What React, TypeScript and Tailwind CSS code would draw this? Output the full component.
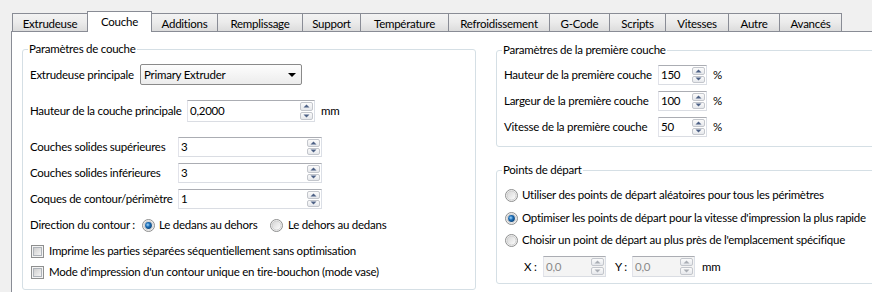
import React from "react";

const tabs = [
  { label: "Extrudeuse", w: "w-[76px]" },
  { label: "Couche", w: "w-[65px]", active: true },
  { label: "Additions", w: "w-[67px]" },
  { label: "Remplissage", w: "w-[86px]" },
  { label: "Support", w: "w-[59px]" },
  { label: "Température", w: "w-[89px]" },
  { label: "Refroidissement", w: "w-[102px]" },
  { label: "G-Code", w: "w-[61px]" },
  { label: "Scripts", w: "w-[57px]" },
  { label: "Vitesses", w: "w-[64px]" },
  { label: "Autre", w: "w-[52px]" },
  { label: "Avancés", w: "w-[63px]" },
];

function SpinArrow({ up, disabled }: { up?: boolean; disabled?: boolean }) {
  return (
    <div className="flex-1 flex items-center justify-center border border-[#c3c6cc] rounded-[2px] bg-linear-to-b from-[#fbfbfb] to-[#e6e8ec]">
      <svg width="7" height="4" viewBox="0 0 7 4">
        <path
          d={up ? "M0.5 3.5 L3.5 0.5 L6.5 3.5 Z" : "M0.5 0.5 L3.5 3.5 L6.5 0.5 Z"}
          fill={disabled ? "#a9adb4" : "#4d6185"}
        />
      </svg>
    </div>
  );
}

function Spin({ value, w, h = "h-[20px]", disabled }: { value: string; w: string; h?: string; disabled?: boolean }) {
  return (
    <div
      className={`${w} ${h} flex border border-[#abadb3] border-b-[#dadde3] border-l-[#e2e3ea] border-r-[#dbdfe6] ${
        disabled ? "bg-[#f4f4f4] text-[#8a8a8a]" : "bg-white text-black"
      }`}
    >
      <div className="flex-1 flex items-center pl-[2px]">{value}</div>
      <div className="w-[15px] flex flex-col gap-px p-px">
        <SpinArrow up disabled={disabled} />
        <SpinArrow disabled={disabled} />
      </div>
    </div>
  );
}

function Radio({ checked }: { checked?: boolean }) {
  return (
    <svg width="13" height="13" viewBox="0 0 13 13" className="shrink-0">
      <defs>
        <linearGradient id="rg" x1="0" y1="0" x2="1" y2="1">
          <stop offset="0" stopColor="#d4d4d4" />
          <stop offset="1" stopColor="#ffffff" />
        </linearGradient>
        <radialGradient id="dot" cx="0.4" cy="0.4" r="0.7">
          <stop offset="0" stopColor="#a6dbff" />
          <stop offset="0.45" stopColor="#1b6cb5" />
          <stop offset="1" stopColor="#0b3c6b" />
        </radialGradient>
      </defs>
      <circle cx="6.5" cy="6.5" r="6" fill="#f4f4f4" stroke="#8e8f8f" />
      <circle cx="6.5" cy="6.5" r="4.5" fill="url(#rg)" stroke="#c8c8c8" strokeWidth="0.8" />
      {checked && <circle cx="6.5" cy="6.5" r="3.4" fill="url(#dot)" />}
    </svg>
  );
}

function Check() {
  return (
    <svg width="13" height="13" viewBox="0 0 13 13" className="shrink-0">
      <defs>
        <linearGradient id="cg" x1="0" y1="0" x2="1" y2="1">
          <stop offset="0" stopColor="#cbcbcb" />
          <stop offset="1" stopColor="#f7f7f7" />
        </linearGradient>
      </defs>
      <rect x="0.5" y="0.5" width="12" height="12" fill="#f4f4f4" stroke="#8e8f8f" />
      <rect x="2.5" y="2.5" width="8" height="8" fill="url(#cg)" stroke="#aeb3b9" />
    </svg>
  );
}

function Group({ title, className, children }: { title: string; className: string; children: React.ReactNode }) {
  return (
    <div className={`relative border border-[#d5dfe5] rounded-[3px] ${className}`}>
      <span className="absolute -top-[9px] left-[5px] bg-white px-[1px] leading-[16px]">{title}</span>
      {children}
    </div>
  );
}

export default function App() {
  return (
    <div className="w-[872px] h-[292px] overflow-hidden whitespace-nowrap bg-[#f0f0f0] text-[11.5px] tracking-[-0.25px] text-black font-['Lato',sans-serif] leading-[16px]">
      {/* onglets */}
      <div className="flex items-end h-[31px] pl-[12px]">
        {tabs.map((t, i) => (
          <div
            key={t.label}
            className={`${t.w} ${i > 0 ? "-ml-px" : ""} shrink-0 flex justify-center border border-b-0 border-[#898c95] ${
              t.active
                ? "h-[21px] -mb-px relative z-10 bg-white pt-[2px]"
                : "h-[18px] bg-linear-to-b from-[#f3f3f3] via-[#ebebeb] to-[#dcdcdc] pt-[2px]"
            }`}
          >
            {t.label}
          </div>
        ))}
      </div>

      {/* page */}
      <div className="ml-[11px] h-[261px] w-[900px] border-t border-l border-[#898c95] bg-white flex items-start">
        <Group title="Paramètres de couche" className="ml-[10px] mt-[17px] w-[454px] h-[241px] pt-[14px] px-[7px]">
          <div className="flex items-center h-[21px]">
            <span className="w-[110px]">Extrudeuse principale</span>
            <div className="w-[162px] h-[21px] flex items-center justify-between pl-[3px] pr-[5px] border border-[#8a8a8a] rounded-[2px] bg-linear-to-b from-[#fdfdfd] to-[#ececec]">
              Primary Extruder
              <svg width="8" height="4" viewBox="0 0 8 4">
                <path d="M0 0 L8 0 L4 4 Z" fill="#000" />
              </svg>
            </div>
          </div>

          <div className="flex items-center mt-[15px] h-[22px]">
            <span className="w-[157px]">Hauteur de la couche principale</span>
            <Spin value="0,2000" w="w-[128px]" h="h-[22px]" />
            <span className="ml-[6px]">mm</span>
          </div>

          {[
            ["Couches solides supérieures", "3", "mt-[15px]"],
            ["Couches solides inférieures", "3", "mt-[6px]"],
            ["Coques de contour/périmètre", "1", "mt-[6px]"],
          ].map(([label, val, mt]) => (
            <div key={label} className={`flex items-center h-[20px] ${mt}`}>
              <span className="w-[148px]">{label}</span>
              <Spin value={val} w="w-[144px]" />
            </div>
          ))}

          <div className="flex items-center mt-[6px] h-[20px]">
            <span className="w-[112px]">Direction du contour :</span>
            <Radio checked />
            <span className="ml-[4px] w-[111px]">Le dedans au dehors</span>
            <Radio />
            <span className="ml-[5px]">Le dehors au dedans</span>
          </div>

          <div className="flex items-center mt-[6px] h-[20px] pl-px">
            <Check />
            <span className="ml-[5px]">Imprime les parties séparées séquentiellement sans optimisation</span>
          </div>
          <div className="flex items-center mt-px h-[20px] pl-px">
            <Check />
            <span className="ml-[5px]">Mode d'impression d'un contour unique en tire-bouchon (mode vase)</span>
          </div>
        </Group>

        <div className="ml-[20px] mt-[18px] flex flex-col">
          <Group title="Paramètres de la première couche" className="w-[390px] h-[97px] pt-[14px] pl-[7px] flex flex-col gap-[6px]">
            {[
              ["Hauteur de la première couche", "150"],
              ["Largeur de la première couche", "100"],
              ["Vitesse de la première couche", "50"],
            ].map(([label, val]) => (
              <div key={label} className="flex items-center h-[20px]">
                <span className="w-[154px]">{label}</span>
                <Spin value={val} w="w-[49px]" />
                <span className="ml-[6px]">%</span>
              </div>
            ))}
          </Group>

          <Group title="Points de départ" className="mt-[23px] w-[390px] h-[114px] pt-[15px] pl-[8px]">
            <div className="flex items-center h-[18px]">
              <Radio />
              <span className="ml-[4px]">Utiliser des points de départ aléatoires pour tous les périmètres</span>
            </div>
            <div className="flex items-center h-[18px] mt-[5px]">
              <Radio checked />
              <span className="ml-[4px]">Optimiser les points de départ pour la vitesse d'impression la plus rapide</span>
            </div>
            <div className="flex items-center h-[18px] mt-[4px]">
              <Radio />
              <span className="ml-[4px]">Choisir un point de départ au plus près de l'emplacement spécifique</span>
            </div>
            <div className="flex items-center h-[21px] mt-[7px] pl-[19px]">
              <span className="w-[19px]">X :</span>
              <Spin value="0,0" w="w-[63px]" h="h-[21px]" disabled />
              <span className="ml-[9px] w-[17px]">Y :</span>
              <Spin value="0,0" w="w-[63px]" h="h-[21px]" disabled />
              <span className="ml-[7px]">mm</span>
            </div>
          </Group>
        </div>
      </div>
    </div>
  );
}
